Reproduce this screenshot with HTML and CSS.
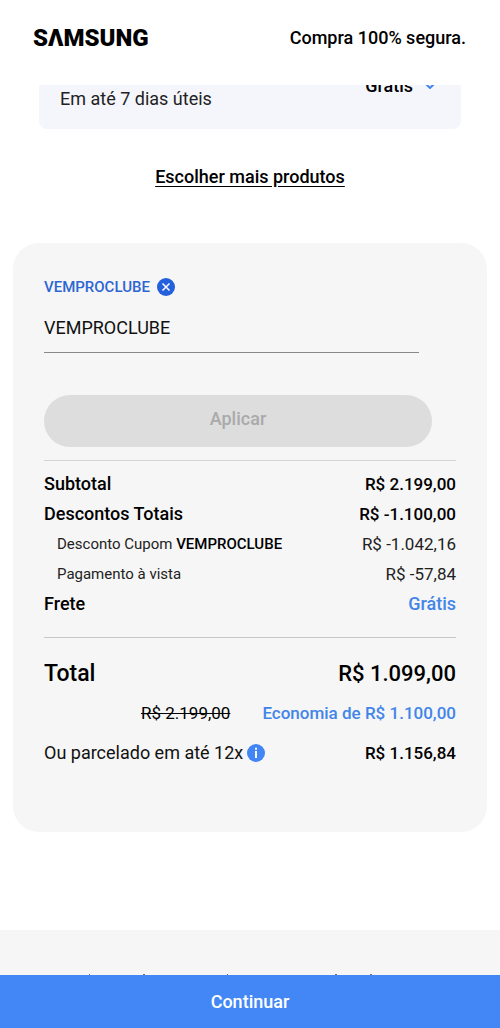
FILE: index.html
```html
<!DOCTYPE html>
<html lang="pt-BR">
<head>
<meta charset="utf-8">
<meta name="viewport" content="width=device-width, initial-scale=1">
<title>Samsung - Carrinho</title>
<link rel="stylesheet" href="styles.css">
</head>
<body>
<header class="header">
  <div class="logo">SΛMSUNG</div>
  <div class="secure">Compra 100% segura.</div>
</header>
<main class="main">
  <section class="shipping">
    <span class="shipping-time">Em até 7 dias úteis</span>
    <span class="shipping-price">Grátis
      <svg class="chevron" viewBox="0 0 10 6" aria-hidden="true"><path d="M1 1l4 4 4-4"/></svg>
    </span>
  </section>
  <a class="more" href="#">Escolher mais produtos</a>
  <section class="card">
    <div class="tag">
      <label for="coupon">VEMPROCLUBE</label>
      <button class="remove" type="button" aria-label="Remover cupom">
        <svg viewBox="0 0 18 18" aria-hidden="true"><circle cx="9" cy="9" r="9"/><path d="M5.500 5.500l7 7M12.500 5.500l-7 7"/></svg>
      </button>
    </div>
    <input class="coupon" id="coupon" type="text" value="VEMPROCLUBE">
    <button class="apply" type="button" disabled>Aplicar</button>
    <dl class="rows">
      <div class="row strong"><dt>Subtotal</dt><dd>R$ 2.199,00</dd></div>
      <div class="row strong"><dt>Descontos Totais</dt><dd>R$ -1.100,00</dd></div>
      <div class="row sub"><dt>Desconto Cupom <b>VEMPROCLUBE</b></dt><dd>R$ -1.042,16</dd></div>
      <div class="row sub"><dt>Pagamento à vista</dt><dd>R$ -57,84</dd></div>
      <div class="row strong"><dt>Frete</dt><dd class="free">Grátis</dd></div>
    </dl>
    <div class="totals">
      <div class="row total"><span>Total</span><span class="total-price">R$ 1.099,00</span></div>
      <div class="savings"><s>R$ 2.199,00</s><span class="blue">Economia de R$ 1.100,00</span></div>
      <div class="row"><span class="installments">Ou parcelado em até 12x
        <svg class="info" viewBox="0 0 18 18" aria-hidden="true"><circle cx="9" cy="9" r="9"/><path d="M9 7v7M9 3.700v2"/></svg></span>
        <span class="price">R$ 1.156,84</span></div>
    </div>
  </section>
</main>
<footer class="footer">
  <svg class="ticks" viewBox="0 0 330 1" aria-hidden="true"><path d="M44 0h1v1h-1zM98 0h2v1h-2zM182 0h1v1h-1zM290 0h2v1h-2zM325 0h2v1h-2z"/></svg>
</footer>
<button class="continue" type="button">Continuar</button>
</body>
</html>
```
FILE: styles.css
```css
* { box-sizing: border-box; }
body {
  margin: 0;
  min-height: 100vh;
  display: flex;
  flex-direction: column;
  background: #fff;
  color: #000;
  font-family: Roboto, "Noto Sans", sans-serif;
  font-size: 18px;
  line-height: 24px;
}
button, input { font: inherit; }
.header {
  position: sticky;
  top: 0;
  z-index: 1;
  display: flex;
  justify-content: space-between;
  align-items: center;
  padding: 22px 34px 31px 33px;
  background: #fff;
}
.logo { font-size: 24px; line-height: 32px; font-weight: 900; }
.secure { font-weight: 500; }
.main {
  display: flex;
  flex-direction: column;
  align-items: center;
  padding: 0 13px;
}
.shipping {
  align-self: stretch;
  display: flex;
  justify-content: space-between;
  align-items: flex-start;
  margin: -25px 26px 0;
  padding: 14px 26px 18px 21px;
  border-radius: 8px;
  background: #f5f6fc;
}
.shipping-time { padding-top: 13px; color: #222; }
.shipping-price { display: flex; align-items: center; gap: 12px; font-weight: 500; }
.chevron { width: 10px; height: 6px; fill: none; stroke: #4285f4; stroke-width: 2; }
.more {
  margin: 36px 0 54px;
  color: #000;
  font-weight: 500;
  text-decoration: underline;
  text-underline-offset: 3px;
}
.card {
  align-self: stretch;
  padding: 32px 31px 64px;
  border-radius: 26px;
  background: #f6f6f6;
}
.tag {
  display: flex;
  align-items: center;
  gap: 7px;
  color: #2d66d2;
  font-size: 15px;
  font-weight: 500;
}
.remove { display: flex; padding: 0; border: 0; background: none; }
.remove svg { width: 18px; height: 18px; fill: #2560dc; }
.remove path { stroke: #fff; stroke-width: 1.5; }
.coupon {
  display: block;
  width: calc(100% - 37px);
  height: 54px;
  padding: 4px 0 0;
  border: 0;
  border-bottom: 1px solid #888;
  border-radius: 0;
  outline: 0;
  background: none;
  color: #111;
}
.apply {
  display: block;
  width: calc(100% - 24px);
  height: 52px;
  margin-top: 42px;
  padding: 0 0 4px;
  border: 0;
  border-radius: 26px;
  background: #ddd;
  color: #aaa;
  font-weight: 500;
}
.rows {
  margin: 13px 0 0;
  padding: 8px 0 18px;
  border-top: 1px solid #d4d4d4;
  border-bottom: 1px solid #c8c8c8;
}
.row { display: flex; justify-content: space-between; align-items: center; min-height: 30px; }
dd { margin: 0; font-size: 17px; }
.strong { font-weight: 500; }
.sub { padding-left: 13px; color: #222; }
.sub dt { font-size: 15px; }
.sub b { color: #000; font-weight: 500; }
.blue, .free { color: #4285e8; font-weight: 500; }
.free { font-size: 18px; }
.totals { display: flex; flex-direction: column; padding-top: 19px; }
.total { min-height: 34px; font-size: 23px; font-weight: 500; }
.total-price { font-size: 22px; }
.savings {
  display: flex;
  justify-content: flex-end;
  gap: 32px;
  padding: 10px 0 13px;
  font-size: 17px;
}
.installments { display: flex; align-items: center; gap: 4px; color: #111; }
.info { width: 18px; height: 18px; fill: #4285f4; }
.info path { stroke: #fff; stroke-width: 2; }
.price { font-size: 17px; font-weight: 500; }
.footer {
  flex: 1;
  display: flex;
  align-items: flex-end;
  margin-top: 98px;
  padding: 0 45px;
  background: #f6f6f6;
}
.ticks { width: 330px; height: 1px; fill: #678; }
.continue {
  position: sticky;
  bottom: 0;
  height: 53px;
  border: 0;
  background: #4287f5;
  color: #fff;
  font-weight: 500;
}
```
